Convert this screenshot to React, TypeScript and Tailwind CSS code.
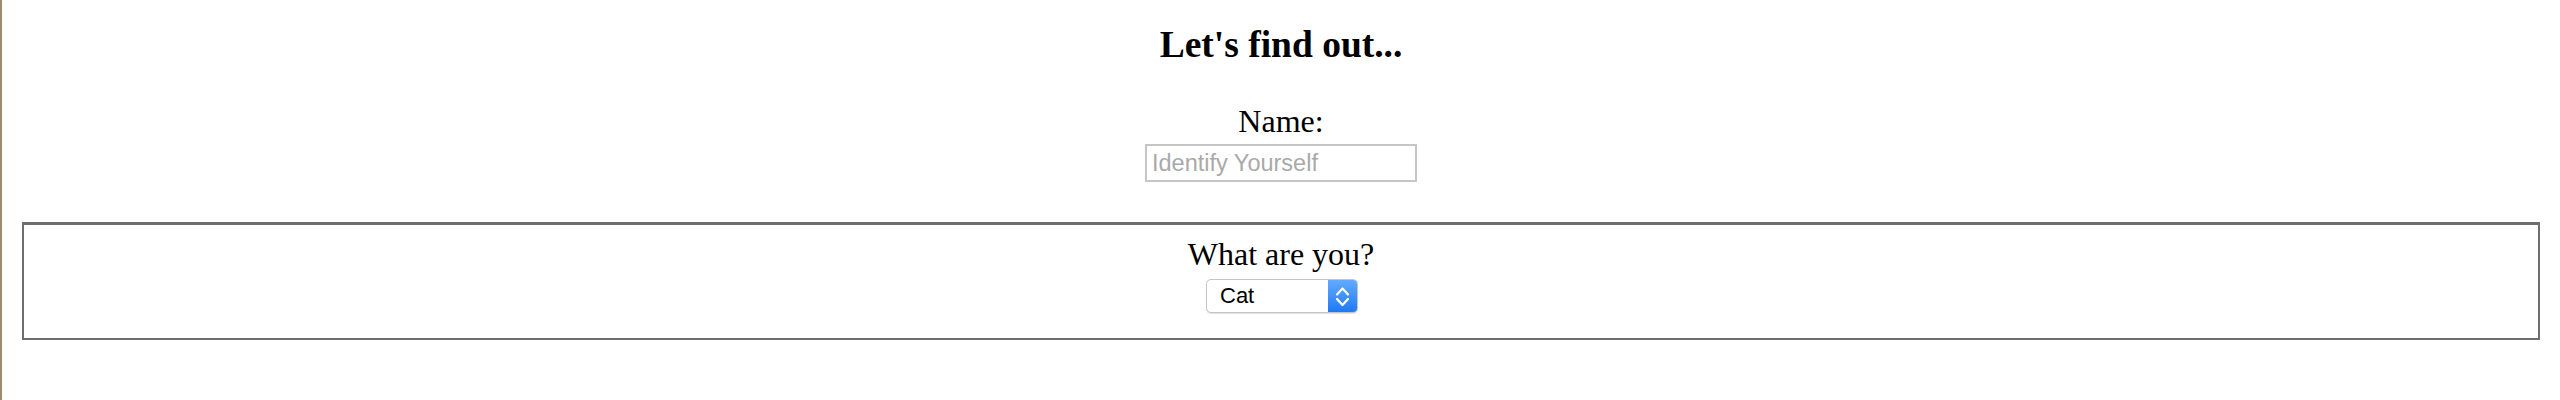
import { useState } from 'react';

// Small "who are you" form: a heading, a name field and a fieldset holding a
// select. Sizes are taken at 2x, the way the page looks on a retina screen.

const SERIF = "font-['Liberation_Serif','Times_New_Roman',serif]";
const SANS = "font-['Liberation_Sans',Arial,sans-serif]";

function Chevrons() {
  return (
    <svg width="29" height="34" viewBox="0 0 29 34" fill="none">
      <path
        d="M9 15.5 L14.5 9.5 L20 15.5"
        stroke="white"
        strokeWidth="2.2"
        strokeLinecap="round"
        strokeLinejoin="round"
      />
      <path
        d="M9 20 L14.5 26 L20 20"
        stroke="white"
        strokeWidth="2.2"
        strokeLinecap="round"
        strokeLinejoin="round"
      />
    </svg>
  );
}

export default function App() {
  const [name, setName] = useState('');

  return (
    <div className="min-h-[400px] w-full bg-white text-black border-l-2 border-[#a08b6e]">
      <div className={`${SERIF} flex flex-col items-center`}>
        {/* Heading */}
        <h3 className="pt-[24px] text-[37.5px] leading-[42px] font-bold">
          Let's find out...
        </h3>

        {/* Name */}
        <label htmlFor="name" className="mt-[37px] text-[32px] leading-[37px]">
          Name:
        </label>
        <input
          id="name"
          value={name}
          onChange={(e) => setName(e.target.value)}
          placeholder="Identify Yourself"
          className={`${SANS} mt-[4px] h-[38px] w-[272px] border-2 border-[#c6c6c6] px-[5px] text-[23.5px] text-black outline-none placeholder:text-[#a9a9a9]`}
        />
      </div>

      {/* What are you? */}
      <fieldset
        className={`${SERIF} mx-[20px] mt-[40px] flex flex-col items-center border-2 border-t-[3px] border-[#6e6e6e] pt-[11px] pb-[25px]`}
      >
        <span className="text-[32px] leading-[37px]">What are you?</span>
        <div
          role="listbox"
          className={`${SANS} mt-[6px] ml-[2px] flex h-[34px] w-[152px] overflow-hidden rounded-[5px] border border-[#c4c4c4] bg-white shadow-[0_1px_1px_rgba(0,0,0,0.12)]`}
        >
          <span className="flex-1 pl-[13px] text-[22px] leading-[32px]">Cat</span>
          <div className="flex w-[29px] items-center justify-center bg-gradient-to-b from-[#62aaff] to-[#1c79f6]">
            <Chevrons />
          </div>
        </div>
      </fieldset>
    </div>
  );
}
